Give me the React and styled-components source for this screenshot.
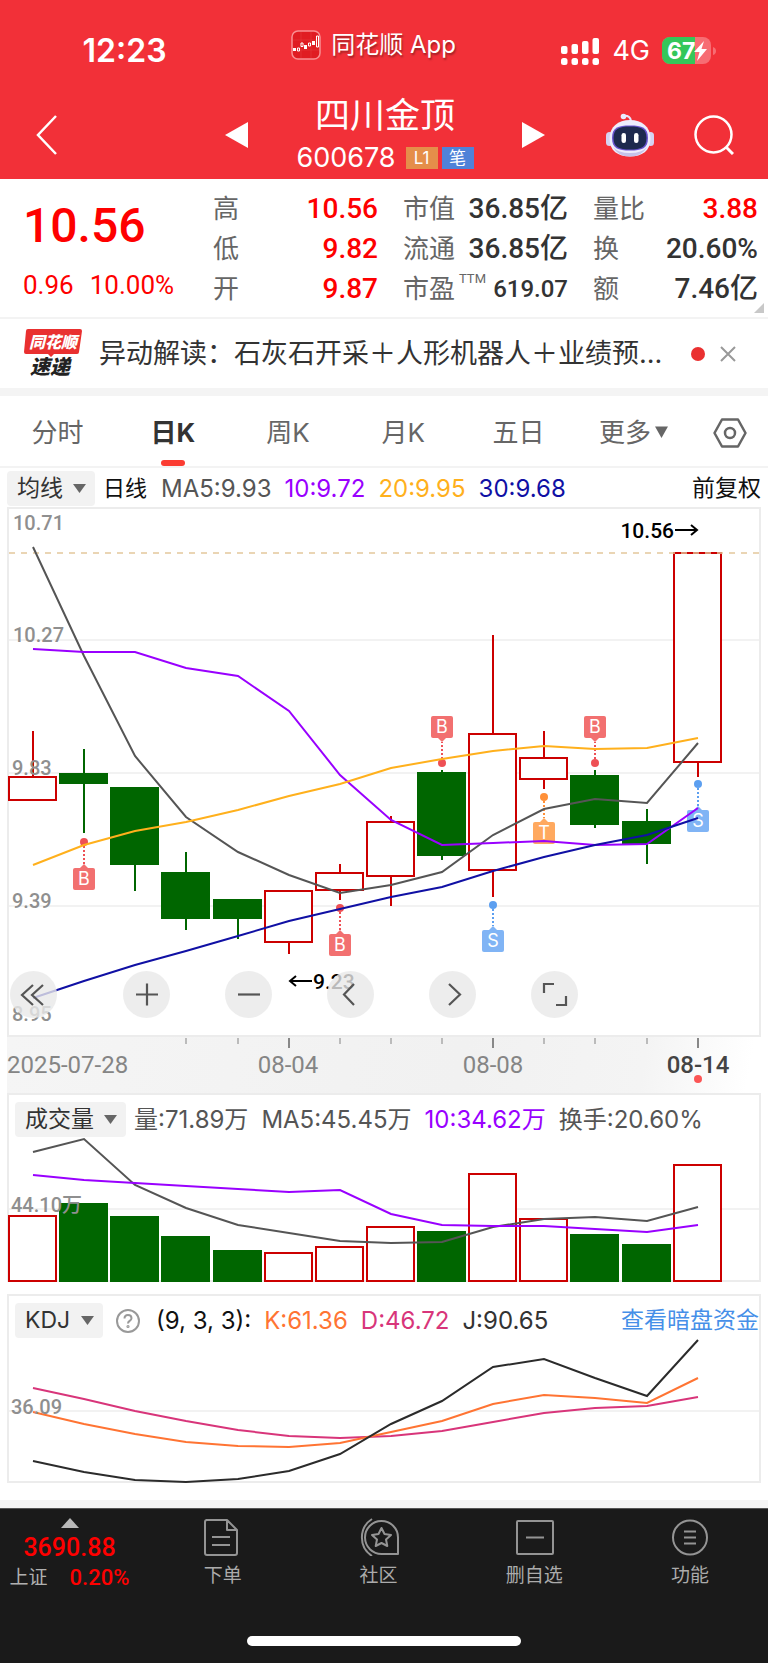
import React, {useState} from 'react';
import styled, {createGlobalStyle} from 'styled-components';

const GlobalStyle = createGlobalStyle`
  * {
    box-sizing: border-box;
  }
  body {
    margin: 0;
    background: #fff;
    color: #333;
    font-family: Inter, "Noto Sans CJK SC", sans-serif;
  }
  button, select {
    font-family: inherit;
    color: inherit;
    background: none;
    border: 0;
    padding: 0;
    margin: 0;
    cursor: pointer;
  }
  svg {
    display: block;
    flex: none;
  }
`;

const red = '#fe0000';
const numberFont = 'Roboto, "Noto Sans CJK SC", sans-serif';

const Container = styled.div``;

/* ---------- header ---------- */

const Header = styled.header`
  background: #f23038;
  color: #fff;
`;
const StatusBar = styled.div`
  display: grid;
  grid-template-columns: 12fr 12fr 13fr;
  align-items: center;
  height: 90px;
  padding-top: 11px;
`;
const Time = styled.div`
  justify-self: center;
  font-size: 32px;
  font-weight: 600;
`;
const AppName = styled.div`
  display: flex;
  justify-content: center;
  align-items: center;
  gap: 10px;
  padding-bottom: 12px;
  font-size: 24px;
  line-height: 28px;
  white-space: nowrap;
  text-shadow: 1px 2px 2px rgba(0, 0, 0, 0.35);
`;
const Signals = styled.div`
  display: flex;
  justify-content: flex-end;
  align-items: center;
  gap: 12px;
  padding-right: 51px;
  font-size: 27px;
`;
const Nav = styled.nav`
  display: grid;
  grid-template-columns: 1fr 320px 1fr;
  align-items: center;
  height: 89px;
  padding: 0 34px 0 36px;
`;
const IconButton = styled.button`
  display: flex;
`;
const Stock = styled.div`
  display: flex;
  justify-content: space-between;
  align-items: center;
`;
const StockTitle = styled.div`
  display: flex;
  flex-direction: column;
  align-items: center;
`;
const Name = styled.h1`
  margin: 0;
  font-size: 35px;
  font-weight: 400;
  line-height: 46px;
`;
const Code = styled.div`
  display: flex;
  align-items: center;
  gap: 4px;
  font-size: 27px;
  line-height: 40px;
`;
const Badge = styled.span`
  width: 32px;
  margin-left: ${props => (props.$first ? '6px' : '0')};
  background: ${props => props.$color};
  font-size: 17px;
  line-height: 22px;
  text-align: center;
`;
const Tools = styled.div`
  display: flex;
  justify-content: flex-end;
  align-items: center;
  gap: 40px;
`;

/* ---------- quote ---------- */

const Quote = styled.section`
  position: relative;
  display: grid;
  grid-template-columns: repeat(4, minmax(0, 1fr));
  gap: 25px;
  height: 140px;
  padding: 10px 10px 8px 23px;
  border-bottom: 2px solid #f3f3f3;
  font-family: ${numberFont};
`;
const Price = styled.div`
  color: ${red};
  font-size: 48px;
  font-weight: 500;
  line-height: 74px;
`;
const Change = styled.div`
  display: flex;
  gap: 16px;
  color: ${red};
  font-size: 26px;
  line-height: 44px;
`;
const Facts = styled.dl`
  margin: 0;
`;
const Fact = styled.div`
  display: flex;
  justify-content: space-between;
  align-items: center;
  height: 40px;
  white-space: nowrap;
`;
const FactName = styled.dt`
  color: #666;
  font-size: 26px;
  line-height: 40px;
`;
const Sup = styled.small`
  margin-left: 4px;
  font-size: 13px;
  line-height: 13px;
  vertical-align: 15px;
`;
const FactValue = styled.dd`
  margin: 0;
  color: ${props => (props.$up ? red : '#333')};
  font-size: ${props => (props.$small ? '24px' : '28px')};
  font-weight: 500;
  line-height: 40px;
`;
const Corner = styled.svg`
  position: absolute;
  right: 4px;
  bottom: 4px;
`;

/* ---------- news ---------- */

const News = styled.section`
  display: flex;
  align-items: center;
  height: 69px;
  padding: 0 32px 0 22px;
`;
const NewsText = styled.a`
  flex: 1;
  margin: 0 30px 0 15px;
  overflow: hidden;
  color: #333;
  font-size: 27px;
  line-height: 40px;
  text-decoration: none;
  white-space: nowrap;
`;
const Unread = styled.span`
  width: 14px;
  height: 14px;
  margin-right: 15px;
  border-radius: 50%;
  background: #ea3030;
`;
const Divider = styled.div`
  height: 8px;
  background: #f4f4f4;
`;

/* ---------- period tabs ---------- */

const Tabs = styled.div`
  display: grid;
  grid-template-columns: repeat(6, 3fr) 2fr;
  height: 72px;
  border-bottom: 2px solid #f3f3f3;
`;
const Tab = styled.button`
  position: relative;
  display: flex;
  justify-content: center;
  align-items: center;
  gap: 4px;
  padding-top: 3px;
  color: ${props => (props.$active ? '#333' : '#666')};
  font-size: 26px;
  font-weight: ${props => (props.$active ? 700 : 400)};
  line-height: 40px;
`;
const Underline = styled.span`
  position: absolute;
  bottom: 0;
  width: 24px;
  height: 6px;
  border-radius: 3px;
  background: #fb3c32;
`;

/* ---------- charts ---------- */

const ChartArea = styled.main`
  padding: 0 7px;
`;
const Legend = styled.div`
  display: flex;
  align-items: center;
  height: ${props => (props.$inPanel ? '43px' : '39px')};
  padding: ${props => (props.$inPanel ? '6px 0 0 6px' : '1px 0 0')};
  font-size: 23px;
  line-height: 35px;
  white-space: nowrap;
`;
const Picker = styled.label`
  position: relative;
  display: flex;
  align-items: center;
  margin-right: 8px;
  border-radius: 4px;
  background: #f2f2f2;
`;
const PickerSelect = styled.select`
  height: 35px;
  padding: 0 32px 0 10px;
  appearance: none;
  color: #333;
  font-size: 23px;
  line-height: 35px;
`;
const PickerArrow = styled.svg`
  position: absolute;
  right: 9px;
  pointer-events: none;
`;
const LegendStart = styled.span`
  margin-right: 14px;
  color: #111;
  font-size: 22px;
`;
const Reading = styled.span`
  margin-right: 13px;
  color: ${props => props.$color || '#555'};
  font-size: 24px;
`;
const LegendEnd = styled.span`
  margin-left: auto;
  color: #111;
`;
const LegendLink = styled.a`
  margin-left: auto;
  color: #468fe8;
  text-decoration: none;
`;
const HelpButton = styled.button`
  display: flex;
  margin: 0 16px 0 5px;
`;
const Panel = styled.section`
  position: relative;
  margin-bottom: ${props => props.$gap || '0'};
  border: 2px solid #ececec;
`;
const Plot = styled.svg`
  width: 100%;
  height: auto;
  overflow: visible;
`;
const AxisLabel = styled.text`
  fill: #8f8f8f;
  font-family: ${numberFont};
  font-size: 20px;
  font-weight: 500;
`;
const DateLabel = styled.text`
  fill: ${props => (props.$current ? '#444' : '#858585')};
  font-family: ${numberFont};
  font-size: 24px;
  font-weight: ${props => (props.$current ? 500 : 400)};
`;
const PeakLabel = styled.text`
  fill: #000;
  font-family: ${numberFont};
  font-size: 21px;
  font-weight: 500;
`;
const TagLetter = styled.text`
  fill: #fff;
  font-family: Inter, sans-serif;
  font-size: 18px;
  text-anchor: middle;
`;
const Controls = styled.div`
  position: absolute;
  left: 1px;
  bottom: 17px;
  display: flex;
  gap: 55px;
`;
const RoundButton = styled.button`
  width: 47px;
  height: 47px;
  margin-right: ${props => (props.$spaced ? '11px' : '0')};
  border-radius: 50%;
  background: rgba(232, 232, 232, 0.8);
`;
const DateAxis = styled.div`
  background: linear-gradient(100deg, #f5f5f5 0%, #f1f1f1 60%, #f4f4f4 84%, #fff 98%);
`;

/* ---------- footer ---------- */

const Footer = styled.footer`
  background: #1a1a1a;
  border-top: 1px solid #555;
`;
const FooterRow = styled.div`
  display: flex;
  height: 127px;
  padding-top: 9px;
`;
const Market = styled.a`
  display: flex;
  flex-direction: column;
  align-items: center;
  width: 145px;
  padding-right: 6px;
  color: ${red};
  font-family: ${numberFont};
  font-size: 25px;
  font-weight: 500;
  line-height: 30px;
  text-decoration: none;
`;
const MarketValue = styled.div`
  margin-top: 5px;
`;
const MarketRow = styled.div`
  display: flex;
  align-items: center;
  gap: 22px;
  font-size: 22px;
`;
const MarketName = styled.span`
  color: #b0b0b0;
  font-size: 19px;
  font-weight: 400;
`;
const FooterItem = styled.button`
  flex: 1;
  display: flex;
  flex-direction: column;
  align-items: center;
  gap: 5px;
  height: 80px;
  color: #ababab;
  font-size: 19px;
  line-height: 30px;
`;
const HomeBar = styled.div`
  width: 274px;
  height: 10px;
  margin: 0 auto;
  border-radius: 5px;
  background: #fff;
`;
const HomeArea = styled.div`
  height: 27px;
`;

/* ---------- data ---------- */

const facts = [
  [
    {name: '高', value: '10.56', up: true},
    {name: '低', value: '9.82', up: true},
    {name: '开', value: '9.87', up: true}
  ],
  [
    {name: '市值', value: '36.85亿'},
    {name: '流通', value: '36.85亿'},
    {name: '市盈', sup: 'TTM', value: '619.07', small: true}
  ],
  [
    {name: '量比', value: '3.88', up: true},
    {name: '换', value: '20.60%'},
    {name: '额', value: '7.46亿'}
  ]
];

const tabs = ['分时', '日K', '周K', '月K', '五日', '更多'];

const UP = '#cc0000';
const DOWN = '#006600';
const PURPLE = '#9900ff';

// up, high, body top, body bottom, low
const candles = [
  [1, 222, 267, 292, 292],
  [0, 240, 264, 275, 324],
  [0, 278, 278, 356, 382],
  [0, 343, 363, 410, 421],
  [0, 390, 390, 410, 430],
  [1, 382, 381, 434, 445],
  [1, 355, 363, 382, 391],
  [1, 307, 312, 368, 397],
  [0, 261, 263, 347, 351],
  [1, 126, 224, 362, 388],
  [1, 222, 248, 271, 280],
  [0, 261, 266, 316, 319],
  [0, 300, 312, 335, 355],
  [1, 44, 43, 254, 268]
];
const volumes = [77, 65, 78, 98, 112, 114, 108, 88, 93, 35, 80, 96, 106, 26];

const priceLines = [
  {color: '#555', points: [38, 147, 247, 308, 343, 366, 384, 376, 363, 326, 300, 290, 294, 234]},
  {color: PURPLE, points: [140, 143, 143, 159, 167, 202, 266, 311, 336, 334, 332, 336, 335, 299]},
  {color: '#ffb01c', points: [356, 336, 322, 313, 301, 287, 275, 259, 250, 242, 237, 240, 239, 229]},
  {color: '#1010a4', points: [489, 472, 456, 442, 427, 412, 400, 388, 378, 362, 348, 336, 326, 309]}
];
const volumeLines = [
  {color: '#555', points: [14, 1, 47, 70, 87, 95, 103, 105, 104, 89, 81, 79, 83, 69]},
  {color: PURPLE, points: [37, 42, 45, 48, 51, 54, 52, 76, 87, 88, 88, 91, 94, 87]}
];
const kdjLines = [
  {color: '#d8357a', points: [49, 60, 72, 82, 91, 97, 99, 97, 92, 83, 74, 69, 67, 58]},
  {color: '#ff7433', points: [73, 85, 95, 103, 107, 108, 104, 93, 82, 65, 56, 59, 64, 39]},
  {color: '#2b2b2b', points: [122, 133, 141, 143, 140, 132, 115, 85, 62, 28, 20, 39, 57, 1]}
];

const tagColors = {
  B: ['#f27070', '#ee5055'],
  S: ['#80b4f5', '#5c9ff0'],
  T: ['#ffa95f', '#ff9038']
};
const markers = [
  {day: 1, letter: 'B', dot: 333, tag: 359},
  {day: 6, letter: 'B', dot: 399, tag: 425},
  {day: 8, letter: 'B', dot: 254, tag: 207},
  {day: 9, letter: 'S', dot: 396, tag: 421},
  {day: 10, letter: 'T', dot: 288, tag: 313},
  {day: 11, letter: 'B', dot: 254, tag: 207},
  {day: 13, letter: 'S', dot: 275, tag: 301}
];

const dayX = i => Math.round(24 + i * 51.13);

/* ---------- pieces ---------- */

const Down = ({size = 13, color = '#666'}) => (
  <svg width={size} height={size} viewBox="0 0 13 13">
    <path d="M0 0.500h13L6.500 12z" fill={color} />
  </svg>
);

const Select = ({label, value}) => (
  <Picker>
    <PickerSelect aria-label={label} defaultValue={value}>
      <option>{value}</option>
    </PickerSelect>
    <PickerArrow width="13" height="11" viewBox="0 0 13 11">
      <path d="M0 1h13L6.500 10z" fill="#666" />
    </PickerArrow>
  </Picker>
);

const Lines = ({lines}) =>
  lines.map(line => (
    <polyline
      key={line.color}
      points={line.points.map((y, i) => `${dayX(i)},${y}`).join(' ')}
      fill="none"
      stroke={line.color}
      strokeWidth="2"
    />
  ));

const Bar = ({x, top, bottom, up}) =>
  up ? (
    <rect x={x - 24} y={top + 1} width="47" height={bottom - top - 2} fill="#fff" stroke={UP} strokeWidth="2" />
  ) : (
    <rect x={x - 25} y={top} width="49" height={bottom - top} fill={DOWN} />
  );

const Marker = ({day, letter, dot, tag}) => {
  const x = dayX(day);
  const [fill, dotFill] = tagColors[letter];
  const above = tag < dot;
  const edge = above ? tag + 22 : tag;
  const tip = above ? edge + 4 : edge - 4;
  return (
    <g>
      <line x1={x} x2={x} y1={dot} y2={tip} stroke={dotFill} strokeWidth="2" strokeDasharray="2 2" />
      <circle cx={x} cy={dot} r="4" fill={dotFill} />
      <path d={`M${x - 4} ${edge}L${x} ${tip}L${x + 4} ${edge}z`} fill={fill} />
      <rect x={x - 11} y={tag} width="22" height="22" rx="2" fill={fill} />
      <TagLetter x={x} y={tag + 17}>{letter}</TagLetter>
    </g>
  );
};

const PriceChart = () => (
  <Plot viewBox="0 0 750 526">
    {[131, 264, 397].map(y => (
      <line key={y} x1="0" x2="750" y1={y} y2={y} stroke="#f2f2f2" strokeWidth="2" />
    ))}
    {candles.map(([up, high, top, bottom, low], i) => (
      <g key={i}>
        <line x1={dayX(i)} x2={dayX(i)} y1={high} y2={low} stroke={up ? UP : DOWN} strokeWidth="2" />
        <Bar x={dayX(i)} top={top} bottom={bottom} up={up} />
      </g>
    ))}
    <line x1="0" x2="750" y1="44" y2="44" stroke="#e3c79c" strokeWidth="1.500" strokeDasharray="6 6" />
    {markers.map(m => (
      <Marker key={m.day} {...m} />
    ))}
    <Lines lines={priceLines} />
    <AxisLabel x="4" y="21">10.71</AxisLabel>
    <AxisLabel x="4" y="133">10.27</AxisLabel>
    <AxisLabel x="3" y="266">9.83</AxisLabel>
    <AxisLabel x="3" y="399">9.39</AxisLabel>
    <AxisLabel x="3" y="512">8.95</AxisLabel>
    <PeakLabel x="665" y="29" textAnchor="end">10.56</PeakLabel>
    <path d="M666 21h22M682 16l6 5l-6 5" fill="none" stroke="#000" strokeWidth="2" />
    <path d="M303 472h-22M287 467l-6 5l6 5" fill="none" stroke="#000" strokeWidth="2" />
    <PeakLabel x="304" y="480">9.23</PeakLabel>
  </Plot>
);

const controls = [
  {label: '最早', d: 'M23 14L12 24l11 10M33 14L22 24l11 10'},
  {label: '放大', d: 'M13 23.500h22M24 12.500v22'},
  {label: '缩小', d: 'M13 23.500h22'},
  {label: '向左', d: 'M27 13L17 23.500l10 10.500'},
  {label: '向右', d: 'M20 13l11 10.500l-11 10.500'},
  {label: '全屏', d: 'M13 22v-9h10M25 34h10v-9'}
];

const footerIcons = [
  {
    label: '下单',
    icon: <path d="M3 2h21l10 10v23q0 2-2 2H4q-2 0-2-2V4q0-2 2-2M24 2v10h10M9 19h18M9 27h18" />
  },
  {
    label: '社区',
    icon: (
      <>
        <path d="M39 36H23A16.500 16.500 0 1 1 39 19.500zM13 1A22 22 0 0 0 13 38" />
        <path d="M22.500 10l3 6 6.500 1-5 4.500 1.300 6.500-5.800-3-5.800 3 1.300-6.500-5-4.500 6.500-1z" />
      </>
    )
  },
  {
    label: '删自选',
    icon: <path d="M4 3h34q1 0 1 1v31q0 1-1 1H4q-1 0-1-1V4q0-1 1-1M12 19.500h18" />
  },
  {
    label: '功能',
    icon: (
      <>
        <circle cx="20" cy="19.500" r="17" />
        <path d="M14 13.500h12M14 19.500h12M14 25.500h12" />
      </>
    )
  }
];

const AppIcon = () => (
  <svg width="30" height="30" viewBox="0 0 30 30">
    <rect x="1" y="1" width="28" height="28" rx="6" fill="#e01c22" stroke="#f98f92" strokeWidth="1.500" />
    <path d="M2 10h26M2 20h26M10 2v26M20 2v26" stroke="#e63c41" strokeWidth="0.500" />
    <path d="M2 18h3v3H2zM13 15h3v4h-3zM21 11h3v4h-3z" fill="#fff" />
    <path d="M6.500 18h2v3h-2zM10 13h2v3.500h-2zM17.500 13h2v3h-2zM25.500 6h2v11h-2z" fill="none" stroke="#fff" />
  </svg>
);

const Cell = () => (
  <svg width="40" height="28" viewBox="0 0 40 28" fill="#fff">
    {[9, 7, 4, 1].map((y, i) => (
      <g key={y}>
        <rect x={i * 10.5 + 1} y={y} width="6.500" height={17 - y} rx="2" />
        <rect x={i * 10.5 + 1} y="21" width="6.500" height="7" rx="2.500" />
      </g>
    ))}
  </svg>
);

const BatteryText = styled.text`
  fill: #fff;
  font-family: Inter, sans-serif;
  font-size: 23px;
  font-weight: 700;
`;
const Battery = () => (
  <svg width="55" height="28" viewBox="0 0 55 28">
    <path d="M8 0h33a8 8 0 0 1 8 8v11a8 8 0 0 1-8 8H8a8 8 0 0 1-8-8V8a8 8 0 0 1 8-8z" fill="#f76d73" />
    <path d="M33 0H8a8 8 0 0 0-8 8v11a8 8 0 0 0 8 8h25z" fill="#35c759" />
    <path d="M51 10q3 1 3 4t-3 4z" fill="#f76d73" />
    <BatteryText x="5" y="22">67</BatteryText>
    <path d="M42 4l-10 11h5.500l-2.500 9 10-12h-5.500z" fill="#fff" />
  </svg>
);

const Robot = () => (
  <svg width="48" height="44" viewBox="0 0 48 44">
    <path d="M17 3q7-1 8 5" fill="none" stroke="#e8e4fb" strokeWidth="2" />
    <circle cx="17.500" cy="3.500" r="2.800" fill="#e9ecff" />
    <rect x="0" y="19" width="7" height="14" rx="3.500" fill="#d5d3f2" />
    <rect x="41" y="19" width="7" height="14" rx="3.500" fill="#d5d3f2" />
    <path d="M24 7C36 7 44.500 14 44.500 25.500C44.500 38 36 43.500 24 43.500S3.500 38 3.500 25.500C3.500 14 12 7 24 7z" fill="#eeedfc" />
    <path d="M7 34Q12 43.500 24 43.500T41 34Q36 40 24 40T7 34z" fill="#c6c3ea" />
    <path d="M24 12.500C36 12.500 42 14.500 42 25S36 37.500 24 37.500S6 35.500 6 25S12 12.500 24 12.500z" fill="#6a55cf" />
    <path d="M24 13.500C35 13.500 40.500 15.500 40.500 25S35 36.500 24 36.500S7.500 34.500 7.500 25S13 13.500 24 13.500z" fill="#1e2a4e" />
    <rect x="15.500" y="20" width="4.500" height="10" rx="2.200" fill="#fff" />
    <rect x="28" y="20" width="4.500" height="10" rx="2.200" fill="#fff" />
  </svg>
);

const Logo = styled.svg`
  overflow: visible;
`;
const LogoText = styled.text`
  fill: ${props => props.$color};
  font-family: "Noto Sans CJK SC", sans-serif;
  font-size: ${props => props.$size};
  font-style: italic;
  font-weight: 900;
`;
const NewsLogo = () => (
  <Logo width="62" height="50" viewBox="0 0 62 50">
    <path d="M6 0h52q2 0 2 2l-3 21q0 2-2 2H32l-3 3-3-3H4q-2 0-2-2L4 2q0-2 2-2z" fill="#e93030" />
    <LogoText x="7" y="19" $color="#fff" $size="16px">同花顺</LogoText>
    <LogoText x="8" y="45" $color="#222" $size="20px">速递</LogoText>
  </Logo>
);

const App = () => {
  const [tab, setTab] = useState('日K');

  return (
    <Container>
      <GlobalStyle />
      <Header>
        <StatusBar>
          <Time>12:23</Time>
          <AppName>
            <AppIcon />
            同花顺 App
          </AppName>
          <Signals>
            <Cell />
            4G
            <Battery />
          </Signals>
        </StatusBar>
        <Nav>
          <IconButton aria-label="返回">
            <svg width="22" height="40" viewBox="0 0 22 40">
              <path d="M20 1L2 20l18 19" fill="none" stroke="#fff" strokeWidth="2.500" />
            </svg>
          </IconButton>
          <Stock>
            <IconButton aria-label="上一只">
              <svg width="23" height="26" viewBox="0 0 23 26">
                <path d="M23 0v26L0 13z" fill="#fff" />
              </svg>
            </IconButton>
            <StockTitle>
              <Name>四川金顶</Name>
              <Code>
                600678
                <Badge $color="#e58e4a" $first>L1</Badge>
                <Badge $color="#4f82d8">笔</Badge>
              </Code>
            </StockTitle>
            <IconButton aria-label="下一只">
              <svg width="23" height="26" viewBox="0 0 23 26">
                <path d="M0 0v26l23-13z" fill="#fff" />
              </svg>
            </IconButton>
          </Stock>
          <Tools>
            <IconButton aria-label="助手">
              <Robot />
            </IconButton>
            <IconButton aria-label="搜索">
              <svg width="40" height="40" viewBox="0 0 40 40" fill="none" stroke="#fff" strokeWidth="2.500">
                <circle cx="19.500" cy="19.500" r="18" />
                <path d="M32 32l7 7" strokeWidth="3" />
              </svg>
            </IconButton>
          </Tools>
        </Nav>
      </Header>

      <Quote>
        <div>
          <Price>10.56</Price>
          <Change>
            <span>0.96</span>
            <span>10.00%</span>
          </Change>
        </div>
        {facts.map((column, i) => (
          <Facts key={i}>
            {column.map(fact => (
              <Fact key={fact.name}>
                <FactName>
                  {fact.name}
                  {fact.sup && <Sup>{fact.sup}</Sup>}
                </FactName>
                <FactValue $up={fact.up} $small={fact.small}>{fact.value}</FactValue>
              </Fact>
            ))}
          </Facts>
        ))}
        <Corner width="10" height="10" viewBox="0 0 10 10">
          <path d="M10 0v10H0z" fill="#c8c8c8" />
        </Corner>
      </Quote>

      <News>
        <NewsLogo />
        <NewsText href="#news">异动解读：石灰石开采＋人形机器人＋业绩预...</NewsText>
        <Unread />
        <IconButton aria-label="关闭">
          <svg width="16" height="16" viewBox="0 0 16 16">
            <path d="M1 1l14 14M15 1L1 15" stroke="#999" strokeWidth="2" />
          </svg>
        </IconButton>
      </News>
      <Divider />

      <Tabs>
        {tabs.map(name => (
          <Tab key={name} $active={name === tab} onClick={() => setTab(name)}>
            {name}
            {name === '更多' && <Down />}
            {name === tab && <Underline />}
          </Tab>
        ))}
        <Tab aria-label="设置">
          <svg width="34" height="30" viewBox="0 0 34 30" fill="none" stroke="#666" strokeWidth="2.500">
            <path d="M9 1.500h16L32.500 15L25 28.500H9L1.500 15z" strokeLinejoin="round" />
            <circle cx="17" cy="15" r="5" />
          </svg>
        </Tab>
      </Tabs>

      <ChartArea>
        <Legend>
          <Select label="主图指标" value="均线" />
          <LegendStart>日线</LegendStart>
          <Reading>MA5:9.93</Reading>
          <Reading $color={PURPLE}>10:9.72</Reading>
          <Reading $color="#ffb01c">20:9.95</Reading>
          <Reading $color="#1010a4">30:9.68</Reading>
          <LegendEnd>前复权</LegendEnd>
        </Legend>
        <Panel>
          <PriceChart />
          <Controls>
            {controls.map((c, i) => (
              <RoundButton key={c.label} aria-label={c.label} $spaced={i === 0}>
                <svg width="47" height="47" viewBox="0 0 47 47" fill="none" stroke="#555" strokeWidth="2.200">
                  <path d={c.d} />
                </svg>
              </RoundButton>
            ))}
          </Controls>
        </Panel>
        <DateAxis>
          <Plot viewBox="0 0 754 56">
            {candles.map((c, i) => {
              const major = i % 4 === 1;
              return i > 2 ? (
                <line
                  key={i}
                  x1={dayX(i) + 2}
                  x2={dayX(i) + 2}
                  y1="1"
                  y2={major ? 11 : 7}
                  stroke={major ? '#888' : '#bbb'}
                  strokeWidth="2"
                />
              ) : null;
            })}
            <DateLabel x="0" y="36">2025-07-28</DateLabel>
            <DateLabel x="281" y="36" textAnchor="middle">08-04</DateLabel>
            <DateLabel x="486" y="36" textAnchor="middle">08-08</DateLabel>
            <DateLabel x="691" y="36" textAnchor="middle" $current>08-14</DateLabel>
            <circle cx="691" cy="42" r="4" fill="#fb5555" />
          </Plot>
        </DateAxis>

        <Panel $gap="12px">
          <Legend $inPanel>
            <Select label="副图指标一" value="成交量" />
            <Reading>量:71.89万</Reading>
            <Reading>MA5:45.45万</Reading>
            <Reading $color={PURPLE}>10:34.62万</Reading>
            <Reading>换手:20.60%</Reading>
          </Legend>
          <Plot viewBox="0 0 750 142">
            <line x1="0" x2="750" y1="71" y2="71" stroke="#f2f2f2" strokeWidth="2" />
            {volumes.map((top, i) => (
              <Bar key={i} x={dayX(i)} top={top} bottom={144} up={candles[i][0]} />
            ))}
            <Lines lines={volumeLines} />
            <AxisLabel x="2" y="74">44.10万</AxisLabel>
          </Plot>
        </Panel>

        <Panel $gap="17px">
          <Legend $inPanel>
            <Select label="副图指标二" value="KDJ" />
            <HelpButton aria-label="指标说明">
              <svg width="24" height="24" viewBox="0 0 24 24" fill="none" stroke="#999" strokeWidth="2">
                <circle cx="12" cy="12" r="11" />
                <path d="M8.500 9.500q0-3.500 3.500-3.500t3.500 3.300q0 1.700-2 2.700q-1.500 0.800-1.500 2.500" />
                <circle cx="12" cy="17.500" r="0.600" />
              </svg>
            </HelpButton>
            <Reading $color="#111">(9, 3, 3):</Reading>
            <Reading $color="#ff7433">K:61.36</Reading>
            <Reading $color="#d8357a">D:46.72</Reading>
            <Reading $color="#333">J:90.65</Reading>
            <LegendLink href="#funds">查看暗盘资金</LegendLink>
          </Legend>
          <Plot viewBox="0 0 750 142">
            <line x1="0" x2="750" y1="72" y2="72" stroke="#f2f2f2" strokeWidth="2" />
            <Lines lines={kdjLines} />
            <AxisLabel x="2" y="75">36.09</AxisLabel>
          </Plot>
        </Panel>
      </ChartArea>
      <Divider />

      <Footer>
        <FooterRow>
          <Market href="#market">
            <svg width="18" height="10" viewBox="0 0 18 10">
              <path d="M9 0l9 10H0z" fill="#b8b8b8" />
            </svg>
            <MarketValue>3690.88</MarketValue>
            <MarketRow>
              <MarketName>上证</MarketName>
              0.20%
            </MarketRow>
          </Market>
          {footerIcons.map(item => (
            <FooterItem key={item.label}>
              <svg
                width="40"
                height="38"
                viewBox="0 0 40 38"
                fill="none"
                stroke="#949494"
                strokeWidth="2"
                strokeLinejoin="round"
              >
                {item.icon}
              </svg>
              {item.label}
            </FooterItem>
          ))}
        </FooterRow>
        <HomeArea>
          <HomeBar />
        </HomeArea>
      </Footer>
    </Container>
  );
};

export default App;
